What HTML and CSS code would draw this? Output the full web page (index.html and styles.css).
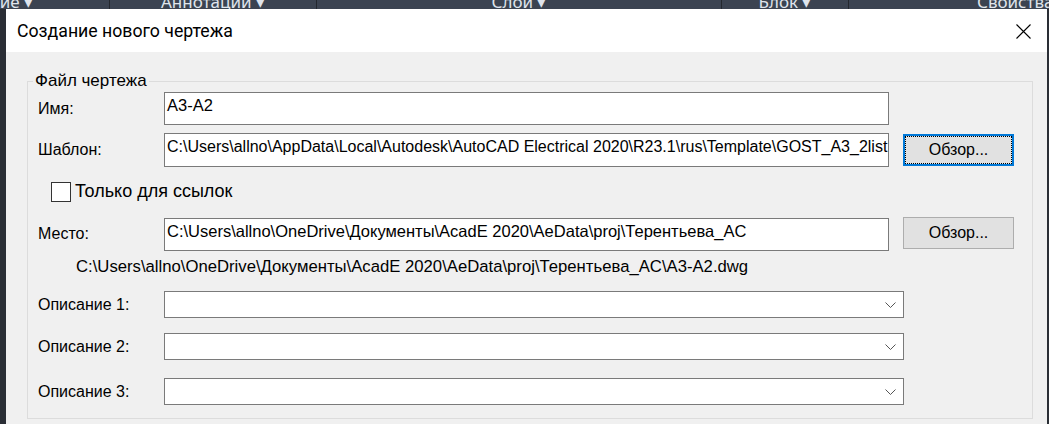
FILE: index.html
```html
<!DOCTYPE html>
<html lang="ru">
<head>
  <meta charset="UTF-8">
  <title>Создание нового чертежа</title>
  <link rel="stylesheet" href="styles.css">
</head>
<body>
  <!-- Лента AutoCAD за диалогом, видна только нижняя кромка -->
  <div class="ribbon">
    <div class="ribbon-cell cell-first"><span class="ribbon-text">Рисование ▾</span></div>
    <div class="ribbon-cell cell-ann"><span class="ribbon-text">Аннотации ▾</span></div>
    <div class="ribbon-cell cell-layer"><span class="ribbon-text">Слой ▾</span></div>
    <div class="ribbon-cell cell-block"><span class="ribbon-text">Блок ▾</span></div>
    <div class="ribbon-cell cell-props"><span class="ribbon-text">Свойства</span></div>
  </div>

  <div class="workspace">
    <div class="edge-left"></div>

    <div class="dialog">
      <div class="titlebar">
        <span class="title">Создание нового чертежа</span>
        <svg class="close" width="15" height="15" viewBox="0 0 15 15">
          <path d="M0.5 0.5 L14.5 14.5 M14.5 0.5 L0.5 14.5" stroke="#000" stroke-width="1.1" fill="none"/>
        </svg>
      </div>

      <div class="dialog-body">
        <fieldset class="group">
          <legend>Файл чертежа</legend>
          <div class="group-inner">

            <div class="row row-name">
              <span class="label">Имя:</span>
              <div class="field">A3-A2</div>
            </div>

            <div class="row row-template">
              <span class="label">Шаблон:</span>
              <div class="field field-tall">C:\Users\allno\AppData\Local\Autodesk\AutoCAD Electrical 2020\R23.1\rus\Template\GOST_A3_2list.dwt</div>
              <button class="btn btn-focus">Обзор...</button>
            </div>

            <div class="row row-check">
              <span class="checkbox"></span>
              <span class="check-label">Только для ссылок</span>
            </div>

            <div class="row row-place">
              <span class="label">Место:</span>
              <div class="field field-place">C:\Users\allno\OneDrive\Документы\AcadE 2020\AeData\proj\Терентьева_AC</div>
              <button class="btn">Обзор...</button>
            </div>

            <div class="row row-path">
              C:\Users\allno\OneDrive\Документы\AcadE 2020\AeData\proj\Терентьева_AC\A3-A2.dwg
            </div>

            <div class="row row-desc">
              <span class="label">Описание 1:</span>
              <div class="combo">
                <svg class="chevron" width="11" height="6" viewBox="0 0 11 6">
                  <polyline points="0.5,0.5 5.5,5.5 10.5,0.5" stroke="#555" stroke-width="1" fill="none"/>
                </svg>
              </div>
            </div>

            <div class="row row-desc row-desc2">
              <span class="label">Описание 2:</span>
              <div class="combo">
                <svg class="chevron" width="11" height="6" viewBox="0 0 11 6">
                  <polyline points="0.5,0.5 5.5,5.5 10.5,0.5" stroke="#555" stroke-width="1" fill="none"/>
                </svg>
              </div>
            </div>

            <div class="row row-desc row-desc3">
              <span class="label">Описание 3:</span>
              <div class="combo">
                <svg class="chevron" width="11" height="6" viewBox="0 0 11 6">
                  <polyline points="0.5,0.5 5.5,5.5 10.5,0.5" stroke="#555" stroke-width="1" fill="none"/>
                </svg>
              </div>
            </div>

          </div>
        </fieldset>
      </div>
    </div>

    <div class="edge-right"></div>
  </div>
</body>
</html>
```

FILE: styles.css
```css
/* Grundlayout */
html, body {
  margin: 0;
  padding: 0;
  width: 100%;
  height: 100%;
  overflow: hidden;
  background: #2a2e35;
  font-family: "Liberation Sans", Arial, sans-serif;
  font-size: 16px;
  color: #000;
}

/* Ribbon oben (abgeschnitten) */
.ribbon {
  display: flex;
  height: 9px;
  overflow: hidden;
  background: #3b4351;
}

.ribbon-cell {
  display: flex;
  justify-content: center;
  overflow: hidden;
  white-space: nowrap;
  border-right: 1px solid #23272e;
  box-sizing: border-box;
}

.ribbon-text {
  display: block;
  margin-top: -6px;
  line-height: 16px;
  font-family: "Noto Sans", sans-serif;
  font-size: 17px;
  color: #dfe4ec;
}

.cell-first { width: 110px; justify-content: flex-end; padding-right: 76px; }
.cell-ann   { width: 207px; }
.cell-layer { width: 405px; }
.cell-block { width: 127px; }
.cell-props { flex: 1; justify-content: flex-start; padding-left: 128px; border-right: none; }

/* Arbeitsbereich */
.workspace {
  display: flex;
  height: 415px;
}

.edge-left {
  width: 6px;
  background: #2a2e35;
}

.edge-right {
  width: 2px;
  background: #2a2e35;
}

.dialog {
  flex: 1;
  display: flex;
  flex-direction: column;
  background: #f0f0f0;
}

/* Titelleiste */
.titlebar {
  height: 43px;
  background: #fff;
  display: flex;
  align-items: center;
  justify-content: space-between;
  padding: 0 16px 0 11px;
}

.title {
  font-family: "Roboto", "Noto Sans", sans-serif;
  font-size: 17.7px;
  color: #000;
  margin-top: 1px;
}

.close {
  display: block;
  margin-top: 1px;
}

/* Dialoginhalt */
.dialog-body {
  flex: 1;
  padding: 20px 14px 0 21px;
}

.group {
  margin: 0;
  padding: 0;
  border: 1px solid #dcdcdc;
}

.group legend {
  margin-left: 5px;
  padding: 0 2px;
  line-height: 18px;
  font-size: 17px;
}

.group-inner {
  padding: 2px 0 13px 10px;
}

.row {
  display: flex;
  align-items: center;
}

.label {
  width: 126px;
  flex-shrink: 0;
}

.field {
  width: 725px;
  height: 33px;
  box-sizing: border-box;
  border: 1px solid #7a7a7a;
  background: #fff;
  padding: 3px 2px 0 2px;
  line-height: 18px;
  font-size: 16.5px;
  white-space: nowrap;
  overflow: hidden;
}

.field-tall { height: 34px; padding-top: 4px; font-size: 16px; }

.row-template { margin-top: 8px; }
.row-check    { margin-top: 14px; margin-bottom: -2px; }
.row-place    { margin-top: 17px; align-items: flex-start; }
.row-place .label { margin-top: 8px; }
.field-place { margin-top: 1px; }
.row-path     { margin-top: 7px; padding-left: 38px; height: 18px; line-height: 18px; font-size: 16.7px; }

/* Buttons */
.btn {
  width: 111px;
  height: 32px;
  margin-left: 14px;
  padding: 0;
  background: #e1e1e1;
  border: 1px solid #adadad;
  font-family: "Liberation Sans", Arial, sans-serif;
  font-size: 16px;
  color: #000;
}

.btn-focus {
  border: 2px solid #0078d7;
  outline: 1px dotted #000;
  outline-offset: -3px;
}

/* Checkbox */
.checkbox {
  width: 20px;
  height: 20px;
  box-sizing: border-box;
  border: 1px solid #333;
  background: #fff;
  margin-left: 13px;
}

.check-label {
  margin-left: 4px;
  font-size: 18px;
}

/* Combos */
.row-desc  { margin-top: 15px; }
.row-desc3 { margin-top: 18px; }

.combo {
  width: 740px;
  height: 27px;
  box-sizing: border-box;
  border: 1px solid #7a7a7a;
  background: #fff;
  display: flex;
  align-items: center;
  justify-content: flex-end;
  padding-right: 7px;
}

.chevron {
  display: block;
}
```
